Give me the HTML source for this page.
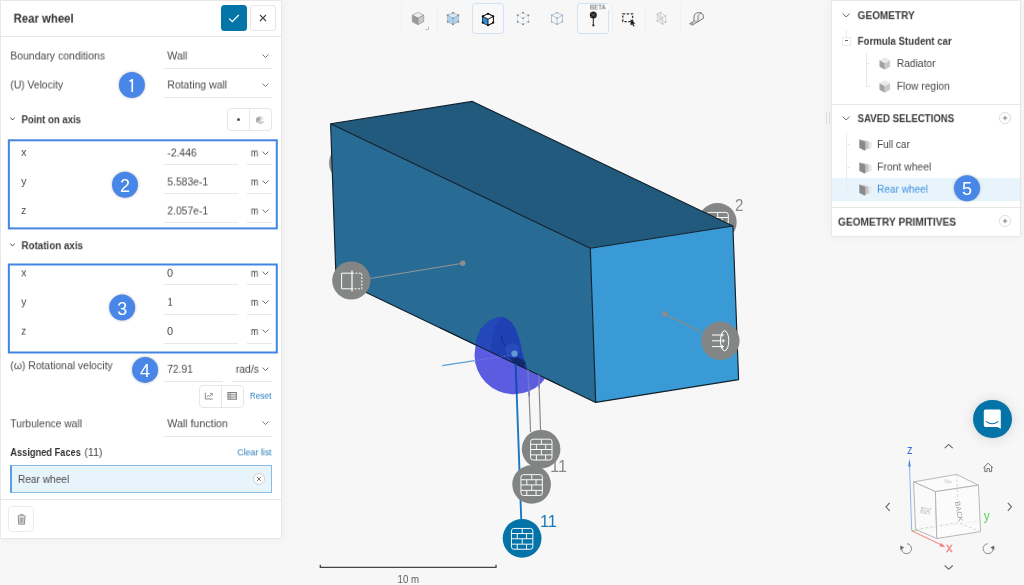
<!DOCTYPE html>
<html>
<head>
<meta charset="utf-8">
<title>Rear wheel</title>
<style>
*{box-sizing:border-box;margin:0;padding:0}
html,body{width:1024px;height:585px;overflow:hidden;background:#f7f7f7;font-family:"Liberation Sans",sans-serif;color:#444}
body{position:relative}
.abs{position:absolute}
.t{position:absolute;will-change:transform;white-space:pre;font-size:11px;line-height:16px;color:#484848;transform-origin:0 50%}
.panel{position:absolute;background:#fff;box-shadow:0 0 1px 1px rgba(0,0,0,.045),0 0 10px rgba(0,0,0,.06)}
.hl{position:absolute;height:1px;background:#e6e6e6}
.ul{position:absolute;height:1px;background:#e7e7e7}
.box{position:absolute;border:2px solid #4286e4}
.num{position:absolute;will-change:transform;width:26px;height:26px;border-radius:13px;background:#4886e7;color:#fff;font-size:18px;line-height:28px;text-align:center;box-shadow:0 0 3px rgba(0,0,0,.28)}
.btn{position:absolute;border:1px solid #e6e6e6;border-radius:4px;background:#fff}
svg{position:absolute;overflow:visible}
#scene,#navcube{will-change:transform}
.chev{position:absolute;width:7px;height:4.4px}
</style>
</head>
<body>
<!-- ============ 3D SCENE ============ -->
<svg id="scene" style="left:0;top:0" width="1024" height="585" viewBox="0 0 1024 585">
  <defs>
    <g id="brick" fill="none" stroke="#fff" stroke-width="0.95">
      <rect x="-10.7" y="-10.4" width="21.4" height="20.8" rx="2.4"/>
      <path d="M-10.7 -5.3 H10.7 M-10.7 -0.1 H10.7 M-10.7 5.3 H10.7"/>
      <path d="M0.1 -10.4 V-5.3 M-4.9 -5.3 V-0.1 M4.4 -5.3 V-0.1 M0.1 -0.1 V5.3 M-4.9 5.3 V10.4 M4.4 5.3 V10.4"/>
    </g>
    <clipPath id="belowEdge"><path d="M336 277.9 L595.7 402.4 L620 420 L620 585 L336 585 Z"/></clipPath>
  </defs>

  <!-- hidden marker circles behind the box -->
  <circle cx="348" cy="163" r="19" fill="#8a8a8a"/>
  <circle cx="717.5" cy="222.2" r="19.2" fill="#848686"/>
  <use href="#brick" x="717.6" y="222.8"/>

  <!-- box -->
  <path d="M330.6 123.7 L472.4 101.4 L732.9 226 L590.3 248.3 Z" fill="#215a7c"/>
  <path d="M330.6 123.7 L590.3 248.3 L595.7 402.4 L336 277.9 Z" fill="#286c96"/>
  <path d="M590.3 248.3 L732.9 226 L738.6 379.6 L595.7 402.4 Z" fill="#3a9ad5"/>
  <path d="M330.6 123.7 L472.4 101.4 L732.9 226 L738.6 379.6 L595.7 402.4 L336 277.9 Z M330.6 123.7 L590.3 248.3 L732.9 226 M590.3 248.3 L595.7 402.4" fill="none" stroke="#10202c" stroke-width="1.15" stroke-linejoin="round"/>

  <text x="735" y="210.5" font-size="16" fill="#8a8a8a" textLength="8.4" lengthAdjust="spacingAndGlyphs">2</text>

  <!-- symmetry marker -->
  <path d="M370 278.5 L462.7 263.3" stroke="#949494" stroke-width="1.1"/>
  <circle cx="462.7" cy="263.3" r="2.7" fill="#8c8c8c"/>
  <circle cx="351.3" cy="280.5" r="19.1" fill="#848686"/>
  <g fill="none" stroke="#fff" stroke-width="1"><path d="M352 273.2 H341.6 V288.8 H352"/><path d="M352 273.2 H361.8 V288.8 H352" stroke-dasharray="2 1.4"/><path d="M352 270.5 V291.5" stroke-width="1.2"/></g>

  <!-- inlet marker -->
  <path d="M664.8 314 L702.6 332.4" stroke="#8c8c8c" stroke-width="1.1"/>
  <circle cx="664.8" cy="314" r="2.8" fill="#8c8c8c"/>
  <circle cx="720.4" cy="340.8" r="19.2" fill="#848686"/>
  <g fill="none" stroke="#fff" stroke-width="1"><path d="M712 335 H723 M712 340.8 H724 M712 346.6 H723"/><path d="M721.5 333.2 L723.6 335 L721.5 336.8 M722.5 339 L724.6 340.8 L722.5 342.6 M721.5 344.8 L723.6 346.6 L721.5 348.4" stroke-width="0.9"/><ellipse cx="724.6" cy="340.8" rx="4.2" ry="10"/></g>

  <!-- wheel sphere -->
  <circle cx="513.8" cy="355" r="39.3" fill="#5b5ce0" clip-path="url(#belowEdge)"/>
  <path d="M475.8 344.9 L477.3 338 L480.8 329.6 L485.6 324 L490.8 320.3 L496 318.1 L501.5 317.2 L506.2 318.6 L511.8 323 L515.4 329 L518.5 337.5 L520.5 345 L521.8 352 L523.5 358 L525.4 363 L527.2 369.6 Z" fill="#1e40b2" stroke="#1e40b2" stroke-width="0.8" stroke-linejoin="round"/>
  <path d="M475.8 344.9 L477.3 338 L480.8 329.6 L485.6 324 L490.8 320.3 L496 318.1 L501.5 317.2 C496 323 491.5 334 490.5 352 Z" fill="#2c50c4" opacity="0.45"/>
  <circle cx="512.6" cy="350" r="7" fill="#4a78e0" opacity="0.2"/>
  <path d="M501.3 336 C501.5 339.8 503 343.2 505.2 345.6" fill="none" stroke="#122a80" stroke-width="1"/>
  <circle cx="514.5" cy="353.7" r="3.1" fill="#6499d4"/>
  <path d="M509.5 357 L513 358.6 L517 357.2 L522 359 L525.8 363.2 L524.6 366 L526.6 369.2 L520 366 L514.5 363.6 Z" fill="#10296a"/>
  <path d="M442.2 365.6 L474.8 360.6" stroke="#5a9fd8" stroke-width="1.1"/>
  <path d="M474.8 360.6 L509 355.4" stroke="#8f9df2" stroke-width="0.8" stroke-dasharray="1 2"/>

  <path d="M440 327.7 L560 385.2" stroke="#10202c" stroke-width="1"/>

  <!-- leader lines -->
  <g clip-path="url(#belowEdge)">
  <path d="M527.8 365 L530.6 432" stroke="#8a8a8a" stroke-width="1.2"/>
  <path d="M538.6 372 L540.6 431" stroke="#8a8a8a" stroke-width="1.2"/>
  <path d="M527.8 365 L529.3 396.5" stroke="#6e74ca" stroke-width="1.3"/>
  <path d="M538.6 372 L539.2 388" stroke="#6e74ca" stroke-width="1.3"/>
  <path d="M515.4 358 L521.3 521" stroke="#1c78c0" stroke-width="1.9"/>
  <path d="M515.4 358 L516.75 394.3" stroke="#1d46b6" stroke-width="1.9"/>
  </g>

  <!-- wall markers -->
  <text x="550.2" y="472.2" font-size="17" fill="#8a8a8a" textLength="16.8" lengthAdjust="spacingAndGlyphs">11</text>
  <circle cx="541.1" cy="449.2" r="19.3" fill="#828484"/>
  <use href="#brick" x="541.3" y="449.6"/>
  <circle cx="531.6" cy="484.5" r="19.3" fill="#828484"/>
  <use href="#brick" x="531.65" y="485.05"/>
  <circle cx="522.1" cy="538.3" r="19.4" fill="#0473a8"/>
  <use href="#brick" x="522.15" y="538.85"/>
  <text x="539.9" y="527" font-size="16.6" fill="#1878b4" textLength="17" lengthAdjust="spacingAndGlyphs">11</text>

  <!-- scale bar -->
  <path d="M320.3 564.8 V567.4 H496 V564.8" fill="none" stroke="#444" stroke-width="1.3"/>
  <text x="397.6" y="582.9" font-size="10.5" fill="#5e5e5e" textLength="21.5" lengthAdjust="spacingAndGlyphs">10 m</text>
</svg>

<!-- ============ NAV CUBE + CHAT ============ -->
<svg id="navcube" style="left:0;top:0" width="1024" height="585" viewBox="0 0 1024 585">
  <!-- axes -->
  <path d="M911.7 530.8 L909.4 462" stroke="#82abee" stroke-width="0.9"/>
  <path d="M909.3 458.6 L908.2 466.5 L910.8 466.4 Z" fill="#4f84e8"/>
  <path d="M911.7 530.8 L977 521.2" stroke="#8fe28f" stroke-width="1"/>
  <path d="M979.6 520.7 L973.4 520.5 L973.8 522.8 Z" fill="#7adc7a"/>
  <!-- cube faces -->
  <path d="M913.6 481.9 L956.6 474.4 L978.4 485.2 L935.4 491.6 Z" fill="#fbfbfb" fill-opacity="0.85" stroke="#b0b0b0" stroke-width="0.9"/>
  <path d="M913.6 481.9 L935.4 491.6 L936.8 538.5 L915.6 529.4 Z" fill="#fafafa" fill-opacity="0.85" stroke="#b0b0b0" stroke-width="0.9"/>
  <path d="M935.4 491.6 L978.4 485.2 L980.6 531.6 L936.8 538.5 Z" fill="#fcfcfc" fill-opacity="0.85" stroke="#b0b0b0" stroke-width="0.9"/>
  <path d="M956.6 474.4 L957.6 500 M915.6 529.4 L958.2 522.6 L980.6 531.6" fill="none" stroke="#cfcfcf" stroke-width="0.9" stroke-dasharray="2.5 2.5"/>
  <path d="M911.7 530.8 L942 545.3" stroke="#f59292" stroke-width="1.2"/>
  <path d="M945.4 547 L939.4 546.4 L941 543 Z" fill="#f27c7c"/>
  <text x="907" y="453.7" font-size="12.5" fill="#3b6fe6" textLength="5.6" lengthAdjust="spacingAndGlyphs">z</text>
  <text x="983.8" y="520.4" font-size="12.5" fill="#5fd660" textLength="6" lengthAdjust="spacingAndGlyphs">y</text>
  <text x="946" y="551.7" font-size="12.5" fill="#f58686" stroke="#f58686" stroke-width="0.3" textLength="6.6" lengthAdjust="spacingAndGlyphs">x</text>
  <text transform="translate(919.9 513.2) rotate(9)" font-size="9.4" fill="#b2b2b2" textLength="10.6" lengthAdjust="spacingAndGlyphs">RIGHT</text>
  <text transform="translate(954.9 501.8) rotate(80.5)" font-size="7.2" fill="#9c9c9c" textLength="20.5" lengthAdjust="spacingAndGlyphs">BACK</text>
  <text transform="translate(942.4 481) rotate(24) skewX(-30)" font-size="4.4" fill="#b4b4b4" textLength="8" lengthAdjust="spacingAndGlyphs">TOP</text>
  <!-- nav chevrons -->
  <g fill="none" stroke="#666" stroke-width="1.1">
    <path d="M944.7 448.2 L948.7 444.4 L952.7 448.2"/>
    <path d="M944.7 565.5 L948.7 569.3 L952.7 565.5"/>
    <path d="M889.7 502.8 L886 506.8 L889.7 510.8"/>
    <path d="M1007.8 502.8 L1011.5 506.8 L1007.8 510.8"/>
    <!-- home -->
    <path d="M983.4 467.8 L988.2 463.2 L993 467.8 M984.8 466.8 V471.6 H987 V468.6 H989.4 V471.6 H991.6 V466.8" stroke-width="0.9"/>
    <!-- rotate ccw -->
    <path d="M907 543.7 A5 5 0 1 1 901.7 547.2" stroke="#7a7a7a" stroke-width="0.9"/>
    <!-- rotate cw -->
    <path d="M987.6 543.7 A5 5 0 1 0 992.9 547.2" stroke="#7a7a7a" stroke-width="0.9"/>
  </g>
  <path d="M900.2 549.9 L900.4 545.6 L904.2 547.6 Z" fill="#666"/>
  <path d="M994.4 549.9 L994.2 545.6 L990.4 547.6 Z" fill="#666"/>
</svg>
<div class="abs" style="left:973.2px;top:399.8px;width:38.4px;height:38.4px;border-radius:50%;background:#0473a8;box-shadow:0 1px 14px rgba(0,0,0,.13),0 0 4px rgba(0,0,0,.06)"></div>
<svg style="left:973.2px;top:399.8px" width="38.4" height="38.4" viewBox="0 0 38.4 38.4"><path d="M12.4 9.6 H26.2 Q27.8 9.6 27.8 11.2 V28.8 L24.4 26.9 H12.4 Q10.8 26.9 10.8 25.3 V11.2 Q10.8 9.6 12.4 9.6 Z" fill="#fff"/><path d="M13.4 21.6 Q19.2 25.8 25 21.6" fill="none" stroke="#0473a8" stroke-width="1.1" stroke-linecap="round"/></svg>


<!-- ============ LEFT PANEL ============ -->
<div class="panel" style="left:1px;top:1px;width:280px;height:537px"></div>
<div id="leftpanel">
  <span class="t" style="left:13px;top:10px;font-size:12.5px;font-weight:bold;color:#333;transform:translate(0.60px,0.67px) scaleX(0.9089);">Rear wheel</span>
  <div class="abs" style="left:221px;top:5px;width:26px;height:26px;background:#0475a8;border-radius:3.5px"></div>
  <svg style="left:221px;top:5px" width="26" height="26" viewBox="0 0 26 26"><path d="M8.2 13.6 L11.3 16.6 L17.8 10" fill="none" stroke="#fff" stroke-width="1.3"/></svg>
  <div class="btn" style="left:250px;top:5px;width:26px;height:26px;border-radius:3px"></div>
  <svg style="left:250px;top:5px" width="26" height="26" viewBox="0 0 26 26"><path d="M10 10 L16 16 M16 10 L10 16" fill="none" stroke="#444" stroke-width="1.1"/></svg>
  <div class="hl" style="left:1px;top:36px;width:280px"></div>

  <!-- row: boundary conditions -->
  <span class="t" style="left:10px;top:47px;font-size:11px;transform:translate(0.30px,0.49px) scaleX(0.9500);">Boundary conditions</span>
  <span class="t" style="left:167px;top:47px;font-size:11px;transform:translate(0.30px,0.49px) scaleX(0.9579);">Wall</span>
  <svg class="chev" style="left:262px;top:53.6px" viewBox="0 0 8 5"><path d="M0.6 0.6 L4 4 L7.4 0.6" fill="none" stroke="#666" stroke-width="1"/></svg>
  <div class="ul" style="left:164px;top:68px;width:108px"></div>

  <!-- row: velocity -->
  <span class="t" style="left:10px;top:76px;font-size:11px;transform:translate(0.30px,0.49px) scaleX(0.9387);">(U) Velocity</span>
  <span class="t" style="left:167px;top:76px;font-size:11px;transform:translate(0.30px,0.49px) scaleX(0.9494);">Rotating wall</span>
  <svg class="chev" style="left:262px;top:82.6px" viewBox="0 0 8 5"><path d="M0.6 0.6 L4 4 L7.4 0.6" fill="none" stroke="#666" stroke-width="1"/></svg>
  <div class="ul" style="left:164px;top:97px;width:108px"></div>
  <div class="num" style="left:118px;top:72px;transform:translate(0.9px,0.0px);font-family:IPAGothic,'Liberation Sans',sans-serif;font-size:19px">1</div>

  <!-- Point on axis -->
  <svg class="chev" style="left:10px;top:117px;width:5px;height:4px" viewBox="0 0 5 4"><path d="M0.4 0.6 L2.5 3 L4.6 0.6" fill="none" stroke="#555" stroke-width="1"/></svg>
  <span class="t" style="left:21px;top:111px;font-size:11px;font-weight:bold;color:#3a3a3a;transform:translate(0.50px,0.19px) scaleX(0.8690);">Point on axis</span>
  <div class="btn" style="left:227px;top:108px;width:45px;height:23px"></div>
  <div class="abs" style="left:249px;top:109px;width:1px;height:21px;background:#e6e6e6"></div>
  <div class="abs" style="left:237px;top:117.5px;width:3.4px;height:3.4px;border-radius:2px;background:#555"></div>
  <svg style="left:0;top:0" width="281" height="140" viewBox="0 0 281 140"><path d="M256 118 L260.6 116 L260.6 120.6 L256 122.6 Z" fill="#b4b4b4"/><path d="M260.6 116 L263.2 117.2 L263.2 119.4 L260.6 120.6 Z" fill="#e2e2e2"/><path d="M256 122.6 L260.6 120.6 L265.2 122 L260.6 124.3 Z" fill="#d0d0d0"/><path d="M258 117.2 V121.6 M256.2 120.2 L260.4 118.4" stroke="#9a9a9a" stroke-width="0.5"/></svg>

  <svg style="left:0;top:0" width="281" height="360" viewBox="0 0 281 360"><rect x="8.85" y="140.3" width="267.95" height="88.1" fill="none" stroke="#4285e3" stroke-width="2"/><rect x="8.85" y="264.5" width="267.95" height="88" fill="none" stroke="#4285e3" stroke-width="2"/></svg>
  <span class="t" style="left:21px;top:143px;font-size:11px;transform:translate(0.20px,0.99px) scaleX(0.9636);">x</span>
  <span class="t" style="left:167px;top:144px;font-size:11px;transform:translate(0.30px,0.49px) scaleX(0.9422);">-2.446</span>
  <span class="t" style="left:250px;top:144px;font-size:11px;transform:translate(0.80px,0.49px) scaleX(0.8286);">m</span>
  <svg class="chev" style="left:262px;top:150.5px;width:7px;height:4.5px" viewBox="0 0 8 5"><path d="M0.6 0.6 L4 4 L7.4 0.6" fill="none" stroke="#666" stroke-width="1.1"/></svg>
  <div class="ul" style="left:164px;top:164px;width:74px"></div>
  <div class="ul" style="left:247px;top:164px;width:25px"></div>

  <span class="t" style="left:21px;top:172px;font-size:11px;transform:translate(0.20px,0.99px) scaleX(0.9636);">y</span>
  <span class="t" style="left:167px;top:173px;font-size:11px;transform:translate(0.30px,0.49px) scaleX(0.9393);">5.583e-1</span>
  <span class="t" style="left:250px;top:173px;font-size:11px;transform:translate(0.80px,0.49px) scaleX(0.8286);">m</span>
  <svg class="chev" style="left:262px;top:179.5px;width:7px;height:4.5px" viewBox="0 0 8 5"><path d="M0.6 0.6 L4 4 L7.4 0.6" fill="none" stroke="#666" stroke-width="1.1"/></svg>
  <div class="ul" style="left:164px;top:193px;width:74px"></div>
  <div class="ul" style="left:247px;top:193px;width:25px"></div>

  <span class="t" style="left:21px;top:201px;font-size:11px;transform:translate(0.20px,0.99px) scaleX(0.8727);">z</span>
  <span class="t" style="left:167px;top:202px;font-size:11px;transform:translate(0.30px,0.49px) scaleX(0.9393);">2.057e-1</span>
  <span class="t" style="left:250px;top:202px;font-size:11px;transform:translate(0.80px,0.49px) scaleX(0.8286);">m</span>
  <svg class="chev" style="left:262px;top:208.5px;width:7px;height:4.5px" viewBox="0 0 8 5"><path d="M0.6 0.6 L4 4 L7.4 0.6" fill="none" stroke="#666" stroke-width="1.1"/></svg>
  <div class="ul" style="left:164px;top:222px;width:74px"></div>
  <div class="ul" style="left:247px;top:222px;width:25px"></div>
  <div class="num" style="left:112px;top:171px;transform:translate(0.0px,0.7px)">2</div>

  <!-- Rotation axis -->
  <svg class="chev" style="left:10px;top:243px;width:5px;height:4px" viewBox="0 0 5 4"><path d="M0.4 0.6 L2.5 3 L4.6 0.6" fill="none" stroke="#555" stroke-width="1"/></svg>
  <span class="t" style="left:21px;top:237px;font-size:11px;font-weight:bold;color:#3a3a3a;transform:translate(0.50px,0.19px) scaleX(0.8888);">Rotation axis</span>
  
  <span class="t" style="left:21px;top:264px;font-size:11px;transform:translate(0.20px,0.39px) scaleX(0.9636);">x</span>
  <span class="t" style="left:167px;top:264px;font-size:11px;transform:translate(0.00px,0.79px) scaleX(0.9796);">0</span>
  <span class="t" style="left:250px;top:264px;font-size:11px;transform:translate(0.80px,0.79px) scaleX(0.8286);">m</span>
  <svg class="chev" style="left:262px;top:270.5px;width:7px;height:4.5px" viewBox="0 0 8 5"><path d="M0.6 0.6 L4 4 L7.4 0.6" fill="none" stroke="#666" stroke-width="1.1"/></svg>
  <div class="ul" style="left:164px;top:284px;width:74px"></div>
  <div class="ul" style="left:247px;top:284px;width:25px"></div>

  <span class="t" style="left:21px;top:293px;font-size:11px;transform:translate(0.20px,0.39px) scaleX(0.9636);">y</span>
  <span class="t" style="left:167px;top:293px;font-size:11px;transform:translate(0.60px,0.79px) scaleX(0.8163);">1</span>
  <span class="t" style="left:250px;top:293px;font-size:11px;transform:translate(0.80px,0.79px) scaleX(0.8286);">m</span>
  <svg class="chev" style="left:262px;top:299.5px;width:7px;height:4.5px" viewBox="0 0 8 5"><path d="M0.6 0.6 L4 4 L7.4 0.6" fill="none" stroke="#666" stroke-width="1.1"/></svg>
  <div class="ul" style="left:164px;top:314px;width:74px"></div>
  <div class="ul" style="left:247px;top:314px;width:25px"></div>

  <span class="t" style="left:21px;top:322px;font-size:11px;transform:translate(0.20px,0.59px) scaleX(0.8727);">z</span>
  <span class="t" style="left:167px;top:322px;font-size:11px;transform:translate(0.00px,0.99px) scaleX(0.9796);">0</span>
  <span class="t" style="left:250px;top:322px;font-size:11px;transform:translate(0.80px,0.99px) scaleX(0.8286);">m</span>
  <svg class="chev" style="left:262px;top:328.5px;width:7px;height:4.5px" viewBox="0 0 8 5"><path d="M0.6 0.6 L4 4 L7.4 0.6" fill="none" stroke="#666" stroke-width="1.1"/></svg>
  <div class="ul" style="left:164px;top:343px;width:74px"></div>
  <div class="ul" style="left:247px;top:343px;width:25px"></div>
  <div class="num" style="left:109px;top:294px;transform:translate(0.2px,0.6px)">3</div>

  <!-- rotational velocity -->
  <span class="t" style="left:10px;top:357px;font-size:11px;transform:translate(0.30px,0.19px) scaleX(0.9450);">(ω) Rotational velocity</span>
  <span class="t" style="left:167px;top:360px;font-size:11px;transform:translate(0.30px,0.79px) scaleX(0.9262);">72.91</span>
  <span class="t" style="left:235px;top:360px;font-size:11px;transform:translate(0.80px,0.79px) scaleX(0.9400);">rad/s</span>
  <svg class="chev" style="left:262px;top:366.5px;width:7px;height:4.5px" viewBox="0 0 8 5"><path d="M0.6 0.6 L4 4 L7.4 0.6" fill="none" stroke="#666" stroke-width="1.1"/></svg>
  <div class="ul" style="left:164px;top:381px;width:59px"></div>
  <div class="ul" style="left:232px;top:381px;width:40px"></div>
  <div class="num" style="left:132px;top:356px;transform:translate(0.1px,0.9px)">4</div>

  <div class="btn" style="left:199px;top:385px;width:45px;height:23px"></div>
  <div class="abs" style="left:221px;top:386px;width:1px;height:21px;background:#e6e6e6"></div>
  <svg style="left:204.1px;top:391.8px" width="10.2" height="8" viewBox="0 0 11 10"><path d="M0.8 0.8 L0.8 8.8 L10 8.8" fill="none" stroke="#7c7c7c" stroke-width="1.1"/><path d="M2.6 6.4 L4.6 4.2 L6.2 5.6 L8.8 2.4" fill="none" stroke="#7c7c7c" stroke-width="1.1"/><path d="M6.8 1.8 L9.4 1.8 L9.4 4.6" fill="none" stroke="#7c7c7c" stroke-width="1"/></svg>
  <svg style="left:226.6px;top:392px" width="10.3" height="7.8" viewBox="0 0 11 9"><rect x="0.6" y="0.6" width="9.8" height="7.8" fill="#ececec" stroke="#7c7c7c" stroke-width="1.1"/><path d="M0.6 3.2 H10.4 M0.6 5.8 H10.4 M3.2 0.6 V8.4" stroke="#7c7c7c" stroke-width="0.9" fill="none"/></svg>
  <span class="t" style="left:249px;top:387px;font-size:9.4px;color:#2a7db8;transform:translate(0.80px,0.74px) scaleX(0.8776);">Reset</span>

  <!-- turbulence wall -->
  <span class="t" style="left:10px;top:415px;font-size:11px;transform:translate(0.30px,0.29px) scaleX(0.9355);">Turbulence wall</span>
  <span class="t" style="left:167px;top:415px;font-size:11px;transform:translate(0.30px,0.19px) scaleX(0.9670);">Wall function</span>
  <svg class="chev" style="left:262px;top:421.1px" viewBox="0 0 8 5"><path d="M0.6 0.6 L4 4 L7.4 0.6" fill="none" stroke="#666" stroke-width="1"/></svg>
  <div class="ul" style="left:164px;top:436px;width:108px"></div>

  <!-- assigned faces -->
  <span class="t" style="left:10px;top:443px;font-size:11px;font-weight:bold;color:#333;transform:translate(0.30px,0.99px) scaleX(0.8416);">Assigned Faces</span>
  <span class="t" style="left:84px;top:443px;font-size:11px;transform:translate(0.40px,0.99px) scaleX(0.9600);">(11)</span>
  <span class="t" style="left:237px;top:444px;font-size:9.4px;color:#2a7db8;transform:translate(0.30px,0.34px) scaleX(0.9405);">Clear list</span>
  <div class="abs" style="left:10px;top:465px;width:262px;height:28px;background:#e8f4fc;border:1px solid #86bce8;border-left:2px solid #5a9fe0"></div>
  <span class="t" style="left:17px;top:470px;font-size:11px;transform:translate(0.90px,0.89px) scaleX(0.9220);">Rear wheel</span>
  <div class="abs" style="left:252.5px;top:473px;width:12px;height:12px;border-radius:6px;border:1px solid #d0d0d0;background:#fff"></div>
  <svg style="left:252.5px;top:473px" width="12" height="12" viewBox="0 0 12 12"><path d="M3.9 3.9 L8.1 8.1 M8.1 3.9 L3.9 8.1" stroke="#666" stroke-width="0.9" fill="none"/></svg>

  <div class="hl" style="left:1px;top:499px;width:280px"></div>
  <div class="btn" style="left:8px;top:506px;width:26px;height:26px;border-color:#ebebeb"></div>
  <svg style="left:16.8px;top:513.7px" width="9.2" height="10.9" viewBox="0 0 10 12"><path d="M0.5 2.2 H9.5 M3.3 2 V0.8 H6.7 V2" fill="none" stroke="#858585" stroke-width="1"/><path d="M1.3 2.5 L1.8 11.2 H8.2 L8.7 2.5" fill="#e2e2e2" stroke="#858585" stroke-width="1"/><path d="M3.5 4 V9.8 M5 4 V9.8 M6.5 4 V9.8" stroke="#858585" stroke-width="0.8"/></svg>
</div>

<!-- ============ RIGHT PANEL ============ -->
<div class="panel" style="left:832px;top:1px;width:188px;height:235px"></div>
<div id="rightpanel">
  <div class="abs" style="left:826px;top:112px;width:1px;height:12px;background:#dcdcdc"></div>
  <div class="abs" style="left:829px;top:112px;width:1px;height:12px;background:#dcdcdc"></div>

  <svg class="chev" style="left:842px;top:13px;width:8.4px;height:5px" viewBox="0 0 8 5"><path d="M0.6 0.6 L4 4 L7.4 0.6" fill="none" stroke="#666" stroke-width="1"/></svg>
  <span class="t" style="left:857px;top:7px;font-size:10.5px;font-weight:bold;color:#3a3a3a;transform:translate(0.60px,0.16px) scaleX(0.9564);">GEOMETRY</span>

  <div class="abs" style="left:846px;top:30px;width:1px;height:7px;background:#ececec"></div>
  <div class="abs" style="left:842px;top:36.5px;width:9px;height:9px;border:1px solid #ebebeb;background:#fff"></div>
  <div class="abs" style="left:844.6px;top:40.4px;width:3.6px;height:1.1px;background:#666"></div>
  <span class="t" style="left:857px;top:32px;font-size:11px;font-weight:bold;color:#3a3a3a;transform:translate(0.60px,0.79px) scaleX(0.8797);">Formula Student car</span>

  <div class="abs" style="left:866px;top:53px;width:0;height:34px;border-left:1px solid #e8e8e8"></div>
  <div class="abs" style="left:866px;top:63px;width:4px;height:0;border-top:1px solid #e8e8e8"></div>
  <div class="abs" style="left:866px;top:86px;width:4px;height:0;border-top:1px solid #e8e8e8"></div>

  <svg style="left:878.5px;top:57.2px" width="11.6" height="13" viewBox="0 0 12 14"><path d="M6 0.3 L11.7 3.4 L6 6.6 L0.3 3.4 Z" fill="#e9e9e9"/><path d="M0.3 3.4 L6 6.6 L6 13.7 L0.3 10.4 Z" fill="#a3a3a3"/><path d="M6 6.6 L11.7 3.4 L11.7 10.4 L6 13.7 Z" fill="#c9c9c9"/></svg>
  <span class="t" style="left:896px;top:54px;font-size:11px;transform:translate(0.80px,0.99px) scaleX(0.9308);">Radiator</span>
  <svg style="left:878.5px;top:79.6px" width="11.6" height="13" viewBox="0 0 12 14"><path d="M6 0.3 L11.7 3.4 L6 6.6 L0.3 3.4 Z" fill="#e9e9e9"/><path d="M0.3 3.4 L6 6.6 L6 13.7 L0.3 10.4 Z" fill="#a3a3a3"/><path d="M6 6.6 L11.7 3.4 L11.7 10.4 L6 13.7 Z" fill="#c9c9c9"/></svg>
  <span class="t" style="left:896px;top:77px;font-size:11px;transform:translate(0.80px,0.69px) scaleX(0.9321);">Flow region</span>

  <div class="hl" style="left:832px;top:104px;width:188px"></div>

  <svg class="chev" style="left:842px;top:116px;width:8.4px;height:5px" viewBox="0 0 8 5"><path d="M0.6 0.6 L4 4 L7.4 0.6" fill="none" stroke="#666" stroke-width="1"/></svg>
  <span class="t" style="left:857px;top:110px;font-size:10.5px;font-weight:bold;color:#3a3a3a;transform:translate(0.60px,0.16px) scaleX(0.9155);">SAVED SELECTIONS</span>
  <div class="abs" style="left:998.5px;top:112px;width:12px;height:12px;border-radius:6px;border:1px solid #dcdcdc;background:#fff"></div>
  <svg style="left:998.5px;top:112px" width="12" height="12" viewBox="0 0 12 12"><path d="M6 3.7 V8.3 M3.7 6 H8.3" stroke="#777" stroke-width="0.9" fill="none"/></svg>

  <div class="abs" style="left:832px;top:178px;width:188px;height:23px;background:#e8f4fc"></div>
  <div class="abs" style="left:846px;top:133px;width:1px;height:58px;background:#ebebeb"></div>
  <div class="abs" style="left:846px;top:144px;width:4px;height:1px;background:#ebebeb"></div>
  <div class="abs" style="left:846px;top:167px;width:4px;height:1px;background:#ebebeb"></div>
  <div class="abs" style="left:846px;top:190px;width:4px;height:1px;background:#ebebeb"></div>

  <svg style="left:858.7px;top:139px" width="13" height="12" viewBox="0 0 13 12"><path d="M6.5 0.8 L12.5 3.2 L12.5 9 L6.5 11 Z" fill="#e6e6e6"/><path d="M3.5 0.5 L9.5 3 L9.5 9.5 L3.5 11.5 Z" fill="#c4c4c4"/><path d="M0.3 0.3 L6.3 3 L6.3 11.7 L0.3 9 Z" fill="#8a8a8a"/></svg>
  <span class="t" style="left:877px;top:135px;font-size:11px;transform:translate(0.10px,0.99px) scaleX(0.9040);">Full car</span>
  <svg style="left:858.7px;top:161.5px" width="13" height="12" viewBox="0 0 13 12"><path d="M6.5 0.8 L12.5 3.2 L12.5 9 L6.5 11 Z" fill="#e6e6e6"/><path d="M3.5 0.5 L9.5 3 L9.5 9.5 L3.5 11.5 Z" fill="#c4c4c4"/><path d="M0.3 0.3 L6.3 3 L6.3 11.7 L0.3 9 Z" fill="#8a8a8a"/></svg>
  <span class="t" style="left:877px;top:158px;font-size:11px;transform:translate(0.10px,0.49px) scaleX(0.9411);">Front wheel</span>
  <svg style="left:858.7px;top:184px" width="13" height="12" viewBox="0 0 13 12"><path d="M6.5 0.8 L12.5 3.2 L12.5 9 L6.5 11 Z" fill="#e6e6e6"/><path d="M3.5 0.5 L9.5 3 L9.5 9.5 L3.5 11.5 Z" fill="#c4c4c4"/><path d="M0.3 0.3 L6.3 3 L6.3 11.7 L0.3 9 Z" fill="#8a8a8a"/></svg>
  <span class="t" style="left:877px;top:180px;font-size:11px;color:#3f8fe0;transform:translate(0.10px,0.69px) scaleX(0.9130);">Rear wheel</span>
  <div class="num" style="left:954px;top:175px;transform:translate(0.0px,0.3px)">5</div>

  <div class="hl" style="left:832px;top:207px;width:188px"></div>
  <span class="t" style="left:837px;top:213px;font-size:10.5px;font-weight:bold;color:#3a3a3a;transform:translate(0.90px,0.66px) scaleX(0.9685);">GEOMETRY PRIMITIVES</span>
  <div class="abs" style="left:998.5px;top:215.3px;width:12px;height:12px;border-radius:6px;border:1px solid #dcdcdc;background:#fff"></div>
  <svg style="left:998.5px;top:215.3px" width="12" height="12" viewBox="0 0 12 12"><path d="M6 3.7 V8.3 M3.7 6 H8.3" stroke="#777" stroke-width="0.9" fill="none"/></svg>
</div>


<!-- ============ TOOLBAR ============ -->
<div id="toolbar">
  <div class="abs" style="left:401px;top:4px;width:1px;height:29px;background:#f0f0f0"></div>
  <div class="abs" style="left:437px;top:4px;width:1px;height:29px;background:#f0f0f0"></div>
  <div class="abs" style="left:612px;top:4px;width:1px;height:29px;background:#f0f0f0"></div>
  <div class="abs" style="left:645px;top:4px;width:1px;height:29px;background:#f0f0f0"></div>
  <div class="abs" style="left:680px;top:4px;width:1px;height:29px;background:#f0f0f0"></div>

  <!-- 1 solid gray cube -->
  <svg style="left:412px;top:12px" width="12" height="13" viewBox="0 0 12 13"><path d="M6 0.3 L11.7 3.2 L6 6.2 L0.3 3.2 Z" fill="#f0f0f0" stroke="#8a8a8a" stroke-width="0.6"/><path d="M0.3 3.2 L6 6.2 L6 12.7 L0.3 9.7 Z" fill="#9b9b9b" stroke="#8a8a8a" stroke-width="0.6"/><path d="M6 6.2 L11.7 3.2 L11.7 9.7 L6 12.7 Z" fill="#c8c8c8" stroke="#8a8a8a" stroke-width="0.6"/></svg>
  <svg style="left:425px;top:26px" width="4" height="4" viewBox="0 0 4 4"><path d="M3.5 0.5 V3.5 H0.5" fill="none" stroke="#bbb" stroke-width="1"/></svg>

  <!-- 2 light-blue cube with vertices -->
  <svg style="left:446.5px;top:12px" width="12" height="13" viewBox="0 0 12 13"><path d="M6 0.5 L11.5 3.3 L11.5 9.7 L6 12.5 L0.5 9.7 L0.5 3.3 Z" fill="#a9d2f4"/><path d="M6 0.5 L11.5 3.3 L6 6.2 L0.5 3.3 Z" fill="#d6e9fa"/><path d="M6 0.5 L11.5 3.3 L11.5 9.7 L6 12.5 L0.5 9.7 L0.5 3.3 Z M0.5 3.3 L6 6.2 L11.5 3.3 M6 6.2 V12.5" fill="none" stroke="#a2a2a2" stroke-width="0.6"/><g fill="#8a8a8a"><circle cx="6" cy="0.8" r="1"/><circle cx="11.3" cy="3.3" r="1"/><circle cx="11.3" cy="9.7" r="1"/><circle cx="6" cy="12.2" r="1"/><circle cx="0.7" cy="9.7" r="1"/><circle cx="0.7" cy="3.3" r="1"/><circle cx="6" cy="6.2" r="0.9"/></g></svg>

  <!-- 3 selected: face cube -->
  <div class="abs" style="left:472px;top:3px;width:32px;height:31px;border:1px solid #d0e3f6;border-radius:3px;background:#f8f8f8"></div>
  <svg style="left:482px;top:12.5px" width="12" height="13" viewBox="0 0 12 13"><path d="M6 0.6 L11.4 3.4 L11.4 9.6 L6 12.4 L0.6 9.6 L0.6 3.4 Z" fill="#fff" stroke="#1a1a1a" stroke-width="1.1"/><path d="M0.6 3.4 L6 6.2 L6 12.4 L0.6 9.6 Z" fill="#2f8fd8"/><path d="M0.6 3.4 L6 6.2 L11.4 3.4 M6 6.2 V12.4" fill="none" stroke="#1a1a1a" stroke-width="1"/><g fill="#111"><circle cx="6" cy="0.9" r="1.1"/><circle cx="11.2" cy="3.4" r="1.1"/><circle cx="11.2" cy="9.6" r="1.1"/><circle cx="6" cy="12.1" r="1.1"/><circle cx="0.8" cy="9.6" r="1.1"/><circle cx="0.8" cy="3.4" r="1.1"/></g></svg>

  <!-- 4 dotted cube w/ vertices -->
  <svg style="left:516.5px;top:12px" width="12" height="13" viewBox="0 0 12 13"><path d="M6 0.5 L11.5 3.3 L11.5 9.7 L6 12.5 L0.5 9.7 L0.5 3.3 Z M0.5 3.3 L6 6.2 L11.5 3.3 M6 6.2 V12.5" fill="none" stroke="#9cc8f0" stroke-width="0.8" stroke-dasharray="1.2 1.2"/><g fill="#8c8c8c"><circle cx="6" cy="0.8" r="1"/><circle cx="11.3" cy="3.3" r="1"/><circle cx="11.3" cy="9.7" r="1"/><circle cx="6" cy="12.2" r="1"/><circle cx="0.7" cy="9.7" r="1"/><circle cx="0.7" cy="3.3" r="1"/><circle cx="6" cy="6.2" r="0.9"/></g></svg>

  <!-- 5 outlined cube w/ blue vertices -->
  <svg style="left:551px;top:12px" width="12" height="13" viewBox="0 0 12 13"><path d="M6 0.5 L11.5 3.3 L11.5 9.7 L6 12.5 L0.5 9.7 L0.5 3.3 Z M0.5 3.3 L6 6.2 L11.5 3.3 M6 6.2 V12.5" fill="none" stroke="#b4b4b4" stroke-width="0.8"/><g fill="#7ab8f0"><circle cx="6" cy="0.8" r="0.9"/><circle cx="11.3" cy="3.3" r="0.9"/><circle cx="11.3" cy="9.7" r="0.9"/><circle cx="6" cy="12.2" r="0.9"/><circle cx="0.7" cy="9.7" r="0.9"/><circle cx="0.7" cy="3.3" r="0.9"/><circle cx="6" cy="6.2" r="0.9"/></g></svg>

  <!-- 6 probe pin (selected) + BETA -->
  <div class="abs" style="left:577px;top:3px;width:32px;height:31px;border:1px solid #d0e3f6;border-radius:3px;background:#f8f8f8"></div>
  <svg style="left:589px;top:11px" width="9" height="16" viewBox="0 0 9 16"><circle cx="4.3" cy="3.9" r="3.5" fill="#222"/><path d="M2 2 L6.6 5.8 M6.6 2 L2 5.8" stroke="#777" stroke-width="0.6"/><path d="M4.3 7 V14" stroke="#222" stroke-width="1"/><rect x="3.4" y="13.4" width="1.9" height="1.9" fill="#222"/></svg>
  <div class="abs" style="left:586.5px;top:3.6px;width:22.6px;height:7.6px;border-radius:4px;background:#fff"></div>
  <span class="t" style="left:589px;top:-1px;font-size:6.4px;color:#555;transform:translate(0.90px,0.58px) scaleX(0.9680);">BETA</span>

  <!-- 7 box select -->
  <svg style="left:622px;top:13px" width="15" height="14" viewBox="0 0 15 14"><rect x="0.8" y="0.8" width="9.8" height="7.8" fill="none" stroke="#333" stroke-width="1.3" stroke-dasharray="2.4 1.5"/><path d="M8.6 6.2 L8.6 12.6 L10.2 11.2 L11.3 13.6 L12.5 13 L11.4 10.8 L13.4 10.6 Z" fill="#222"/></svg>

  <!-- 8 wireframe light -->
  <svg style="left:0;top:0" width="720" height="36" viewBox="0 0 720 36"><g fill="none" stroke="#c6c6c6" stroke-width="0.7"><path d="M657.3 14.2 L662.4 17.6 L662.8 24.1 L657.3 21.1 Z"/><path d="M660.4 12.5 L665.5 15.9 L665.9 22.1 L660.4 19 Z"/><path d="M657.3 14.2 L660.4 12.5 M662.4 17.6 L665.5 15.9 M662.8 24.1 L665.9 22.1 M657.3 21.1 L660.4 19 M657.3 14.2 L662.8 24.1 M662.4 17.6 L657.3 21.1"/></g><g fill="#bdbdbd"><circle cx="657.3" cy="14.2" r="0.8"/><circle cx="662.4" cy="17.6" r="0.8"/><circle cx="662.8" cy="24.1" r="0.8"/><circle cx="657.3" cy="21.1" r="0.8"/><circle cx="660.4" cy="12.5" r="0.8"/><circle cx="665.5" cy="15.9" r="0.8"/><circle cx="665.9" cy="22.1" r="0.8"/></g></svg>

  <!-- 9 tape measure -->
  <svg style="left:689px;top:12px" width="15" height="14" viewBox="0 0 15 14"><path d="M5 9.2 V5 C5 2.2 7 0.6 9.6 0.6 H10.4 C13 0.6 14.4 2.4 14.4 4.6 V6.4 L9 9.6 Z" fill="#f0f0f0" stroke="#777" stroke-width="1"/><path d="M9 9.6 V5.4 C9 3 10.4 1.2 12.4 1" fill="none" stroke="#777" stroke-width="0.9"/><path d="M5 9.2 L0.6 11.6 L3.4 13.2 L9 9.6" fill="#cfcfcf" stroke="#777" stroke-width="0.9"/><path d="M2.4 11 L4.6 12.2" stroke="#777" stroke-width="0.7"/></svg>
</div>




</body>
</html>
